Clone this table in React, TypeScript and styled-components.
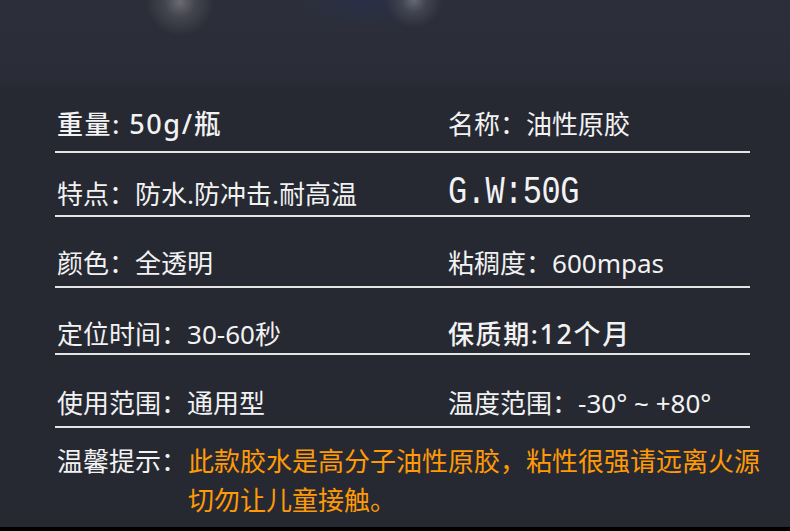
import React from 'react';
import styled, { createGlobalStyle } from 'styled-components';

const GlobalStyle = createGlobalStyle`
  html, body {
    margin: 0;
    padding: 0;
    background: #262932;
  }
  * { box-sizing: border-box; }
`;

const FONT = `"Noto Sans", "Noto Sans CJK SC", sans-serif`;

type Spec = { label: string; value: string; strong?: boolean };

const ROWS: { h: number; pb: number; left: Spec; right: Spec; mono?: boolean }[] = [
  { h: 57, pb: 12, left: { label: '重量: ', value: '50g/瓶', strong: true }, right: { label: '名称：', value: '油性原胶' } },
  { h: 64, pb: 6, left: { label: '特点：', value: '防水.防冲击.耐高温' }, right: { label: '', value: 'G.W:50G' }, mono: true },
  { h: 71, pb: 8, left: { label: '颜色：', value: '全透明' }, right: { label: '粘稠度：', value: '600mpas' } },
  { h: 67, pb: 4, left: { label: '定位时间：', value: '30-60秒' }, right: { label: '保质期:', value: '12个月', strong: true } },
  { h: 73, pb: 8, left: { label: '使用范围：', value: '通用型' }, right: { label: '温度范围：', value: '-30° ~ +80°' } },
];

const Page = styled.div`
  width: 790px;
  height: 531px;
  display: flex;
  flex-direction: column;
  background: #262932;
  font-family: ${FONT};
  color: #f2f2f2;
  overflow: hidden;
`;

const Header = styled.div`
  height: 96px;
  flex: none;
  background:
    radial-gradient(ellipse 34px 34px at 180px 2px, rgba(170, 166, 172, 0.5) 0%, rgba(150, 146, 154, 0.22) 45%, rgba(120, 118, 128, 0) 100%),
    radial-gradient(ellipse 28px 28px at 414px 0px, rgba(175, 175, 182, 0.45) 0%, rgba(150, 150, 160, 0.2) 45%, rgba(120, 120, 130, 0) 100%),
    radial-gradient(ellipse 70px 24px at 365px 4px, rgba(38, 50, 88, 0.45), rgba(38, 50, 88, 0) 100%),
    linear-gradient(180deg, #2c2f39 0%, #2a2d37 82%, #272a33 92%, #262932 100%);
`;

const Table = styled.div`
  margin-left: 55px;
  width: 695px;
  display: flex;
  flex-direction: column;
`;

const Row = styled.div<{ $h: number; $pb: number }>`
  height: ${({ $h }) => $h}px;
  padding-bottom: ${({ $pb }) => $pb}px;
  padding-left: 2px;
  display: grid;
  grid-template-columns: 391px 1fr;
  align-items: end;
  border-bottom: 2px solid #e4e4e6;
`;

const Cell = styled.div<{ $strong?: boolean }>`
  font-size: 26px;
  line-height: 30px;
  white-space: nowrap;
  font-weight: ${({ $strong }) => ($strong ? 500 : 400)};
  letter-spacing: ${({ $strong }) => ($strong ? '1.6px' : '0')};
`;

const Value = styled.span<{ $strong?: boolean }>`
  font-size: ${({ $strong }) => ($strong ? '27px' : 'inherit')};
`;

const Mono = styled.span`
  display: inline-block;
  font-family: "Liberation Mono", monospace;
  font-size: 32px;
  line-height: 30px;
  transform: scaleY(1.22);
  transform-origin: 50% 60%;
  letter-spacing: -0.5px;
`;

const Notice = styled.div`
  padding: 14px 0 0 57px;
  display: grid;
  grid-template-columns: 131px 1fr;
  font-size: 26px;
  line-height: 39px;
`;

const NoticeText = styled.div`
  color: #ff9a06;
  white-space: nowrap;
`;

const Spacer = styled.div`
  flex: 1;
`;

const Footer = styled.div`
  height: 4px;
  flex: none;
  background: #000;
`;

function Field({ spec, mono }: { spec: Spec; mono?: boolean }) {
  if (mono) {
    return (
      <Cell>
        <Mono>{spec.value}</Mono>
      </Cell>
    );
  }
  return (
    <Cell $strong={spec.strong}>
      {spec.label}
      <Value $strong={spec.strong}>{spec.value}</Value>
    </Cell>
  );
}

export default function App() {
  return (
    <Page>
      <GlobalStyle />
      <Header />
      <Table>
        {ROWS.map((r, i) => (
          <Row key={i} $h={r.h} $pb={r.pb}>
            <Field spec={r.left} />
            <Field spec={r.right} mono={r.mono} />
          </Row>
        ))}
      </Table>
      <Notice>
        <div>温馨提示：</div>
        <NoticeText>
          此款胶水是高分子油性原胶，粘性很强请远离火源
          <br />
          切勿让儿童接触。
        </NoticeText>
      </Notice>
      <Spacer />
      <Footer />
    </Page>
  );
}
